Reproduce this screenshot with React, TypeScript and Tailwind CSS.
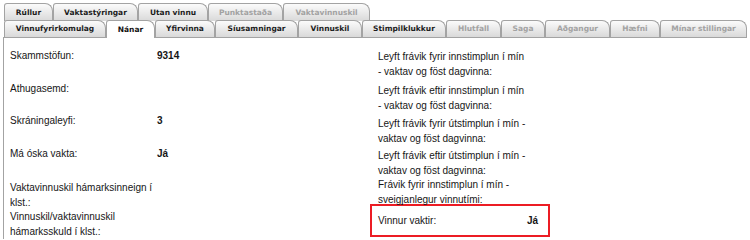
import React from "react";

type TabDef = { label: string; w: string; disabled?: boolean; active?: boolean };

const row1: TabDef[] = [
  { label: "Rúllur", w: "w-[49px]" },
  { label: "Vaktastýringar", w: "w-[85px]" },
  { label: "Utan vinnu", w: "w-[70px]" },
  { label: "Punktastaða", w: "w-[75px]", disabled: true },
  { label: "Vaktavinnuskil", w: "w-[87px]", disabled: true },
];

const row2: TabDef[] = [
  { label: "Vinnufyrirkomulag", w: "w-[102px]" },
  { label: "Nánar", w: "w-[49px]", active: true },
  { label: "Yfirvinna", w: "w-[60px]" },
  { label: "Síusamningar", w: "w-[83px]" },
  { label: "Vinnuskil", w: "w-[64px]" },
  { label: "Stimpilklukkur", w: "w-[84px]" },
  { label: "Hlutfall", w: "w-[55px]", disabled: true },
  { label: "Saga", w: "w-[44px]", disabled: true },
  { label: "Aðgangur", w: "w-[65px]", disabled: true },
  { label: "Hæfni", w: "w-[50px]", disabled: true },
  { label: "Mínar stillingar", w: "w-[87px]", disabled: true },
];

function Tab({ t, h }: { t: TabDef; h: string }) {
  const base =
    "flex items-center justify-center shrink-0 border-t border-l border-r border-[#a3a3a3] rounded-tl-[3px] rounded-tr-[8px] font-bold text-[7.5px] leading-none whitespace-nowrap";
  const look = t.active
    ? "bg-white text-[#111] relative z-10 h-[18px]"
    : t.disabled
    ? "bg-linear-to-b from-[#fbfbfb] to-[#d9d9d9] text-[#a2a2a2] " + h
    : "bg-linear-to-b from-[#fbfbfb] to-[#d9d9d9] text-[#1c1c1c] " + h;
  return <div className={`${base} ${look} ${t.w}`}>{t.label}</div>;
}

function LRow({ label, value, h }: { label: string; value?: string; h: string }) {
  return (
    <div className={`flex items-start ${h}`}>
      <div className="w-[147px] shrink-0">{label}</div>
      {value && <div className="font-bold">{value}</div>}
    </div>
  );
}

function RRow({ label, h }: { label: string; h: string }) {
  return (
    <div className={`flex items-start border-x-2 border-transparent pl-[6px] ${h}`}>
      <div className="w-[149px] shrink-0">{label}</div>
    </div>
  );
}

export default function App() {
  return (
    <div className="w-[750px] h-[239px] overflow-hidden bg-white font-['Liberation_Sans',Arial,sans-serif] text-[10px] leading-[15px] text-[#161616]">
      <div className="pt-[3px] pl-[4px] font-['DejaVu_Sans',Verdana,sans-serif]">
        <div className="flex h-[18px]">
          {row1.map((t) => (
            <Tab key={t.label} t={t} h="h-[18px]" />
          ))}
        </div>
        <div className="flex h-[17px] -mt-px items-start">
          {row2.map((t) => (
            <Tab key={t.label} t={t} h="h-[17px]" />
          ))}
        </div>
      </div>
      <div className="ml-[3px] w-[744px] h-[202px] border-l border-t border-[#a3a3a3] flex">
        <div className="w-[366px] shrink-0 pl-[6px] pt-[10px]">
          <LRow label="Skammstöfun:" value="9314" h="h-[33px]" />
          <LRow label="Athugasemd:" h="h-[32px]" />
          <LRow label="Skráningaleyfi:" value="3" h="h-[33px]" />
          <LRow label="Má óska vakta:" value="Já" h="h-[34px]" />
          <LRow label="Vaktavinnuskil hámarksinneign í klst.:" h="h-[29px]" />
          <LRow label="Vinnuskil/vaktavinnuskil hámarksskuld í klst.:" h="h-[30px]" />
        </div>
        <div className="w-[180px] shrink-0 pt-[11px]">
          <RRow label="Leyft frávik fyrir innstimplun í mín - vaktav og föst dagvinna:" h="h-[34px]" />
          <RRow label="Leyft frávik eftir innstimplun í mín - vaktav og föst dagvinna:" h="h-[33px]" />
          <RRow label="Leyft frávik fyrir útstimplun í mín - vaktav og föst dagvinna:" h="h-[32px]" />
          <RRow label="Leyft frávik eftir útstimplun í mín - vaktav og föst dagvinna:" h="h-[29px]" />
          <RRow label="Frávik fyrir innstimplun í mín - sveigjanlegur vinnutími:" h="h-[27px]" />
          <div className="flex items-center h-[33px] border-2 border-[#ec1c24] pl-[6px]">
            <div className="w-[149px] shrink-0">Vinnur vaktir:</div>
            <div className="font-bold">Já</div>
          </div>
        </div>
      </div>
    </div>
  );
}
